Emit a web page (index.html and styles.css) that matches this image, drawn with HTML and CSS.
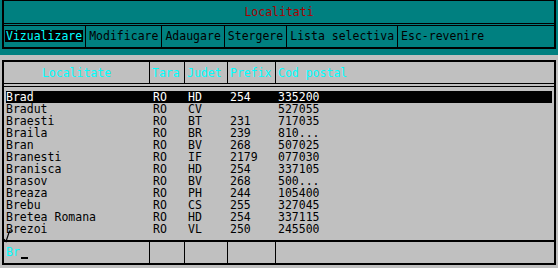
FILE: index.html
```html
<!DOCTYPE html>
<html lang="ro">
<head>
    <meta charset="UTF-8">
    <title>Localitati</title>
    <link rel="stylesheet" href="styles.css">
</head>
<body>

<!-- bara de sus -->
<div class="top">
    <div class="frame">
        <div class="title">Localitati</div>
        <div class="menu">
            <span class="item first"><span class="active">Vizualizare</span></span>
            <span class="item">Modificare</span>
            <span class="item">Adaugare</span>
            <span class="item">Stergere</span>
            <span class="item">Lista selectiva</span>
            <span class="item last">Esc-revenire</span>
        </div>
    </div>
</div>

<!-- lista localitati -->
<div class="panel">
    <div class="grid head">
        <div class="cell center">Localitate</div>
        <div class="cell">Tara</div>
        <div class="cell">Judet</div>
        <div class="cell">Prefix</div>
        <div class="cell">Cod postal</div>
    </div>
    <div class="dbl"></div>

    <div class="rows" id="rows"></div>

    <div class="grid foot">
        <div class="cell"><span class="search">Br</span><span class="cursor"></span></div>
        <div class="cell"></div>
        <div class="cell"></div>
        <div class="cell"></div>
        <div class="cell"></div>
        <svg class="check" width="11" height="13" viewBox="0 0 11 13">
            <polyline points="1,9 3,11.5 6.5,1 10,1" fill="none" stroke="#000" stroke-width="1.2"/>
        </svg>
    </div>
</div>

<script>
    const localitati = [
        ["Brad", "RO", "HD", "254", "335200"],
        ["Bradut", "RO", "CV", "", "527055"],
        ["Braesti", "RO", "BT", "231", "717035"],
        ["Braila", "RO", "BR", "239", "810..."],
        ["Bran", "RO", "BV", "268", "507025"],
        ["Branesti", "RO", "IF", "2179", "077030"],
        ["Branisca", "RO", "HD", "254", "337105"],
        ["Brasov", "RO", "BV", "268", "500..."],
        ["Breaza", "RO", "PH", "244", "105400"],
        ["Brebu", "RO", "CS", "255", "327045"],
        ["Bretea Romana", "RO", "HD", "254", "337115"],
        ["Brezoi", "RO", "VL", "250", "245500"]
    ];

    const rows = document.getElementById('rows');
    localitati.forEach((l, i) => {
        const div = document.createElement('div');
        div.className = 'row' + (i === 0 ? ' sel' : '');
        div.innerHTML = l.map(v => `<span>${v}</span>`).join('');
        rows.appendChild(div);
    });
</script>

</body>
</html>
```

FILE: styles.css
```css
body { margin: 0; background: #c0c0c0; font-family: "DejaVu Sans Mono", monospace; font-size: 11.5px; width: 558px; height: 268px; overflow: hidden; }

.top { background: #008080; height: 55px; padding: 0 2px; box-sizing: border-box; }
.frame { border: 2px solid #000; border-top-width: 1px; }
.title { height: 22px; line-height: 22px; text-align: center; color: #aa0000; border-bottom: 1px solid #000; }
.menu { display: flex; height: 21px; align-items: center; border-top: 1px solid #000; margin-top: 1px; }
.item { padding: 0 3px; height: 21px; line-height: 21px; border-right: 1px solid #000; color: #000; }
.item.first { padding: 0 2px 0 1px; }
.item.last { border-right: none; }
.active { background: #000; color: #00ffff; padding: 0 1px; display: inline-block; line-height: 12px; }

.panel { margin: 5px 2px 0 2px; border: 2px solid #000; height: 205px; box-sizing: border-box; }
.grid { display: grid; grid-template-columns: 146px 35px 43px 48px 1fr; position: relative; }
.cell { padding: 0 2px; border-right: 1px solid #000; }
.cell:nth-child(5) { border-right: none; }
.center { text-align: center; }
.head { height: 22px; line-height: 22px; color: #00ffff; border-bottom: 1px solid #000; box-sizing: border-box; }
.dbl { margin-top: 2px; border-top: 1px solid #000; }

.rows { padding: 4px 2px 5px 2px; }
.row { display: grid; grid-template-columns: 147px 35px 42px 48px 1fr; height: 12px; line-height: 12px; color: #000; }
.row.sel { background: #000; color: #fff; }

.foot { height: 23px; line-height: 21px; border-top: 2px solid #000; box-sizing: border-box; }
.search { color: #00ffff; }
.cursor { display: inline-block; width: 7px; height: 2px; background: #000; margin-left: 1px; vertical-align: -3px; }
.check { position: absolute; left: -1px; top: -12px; }
```
